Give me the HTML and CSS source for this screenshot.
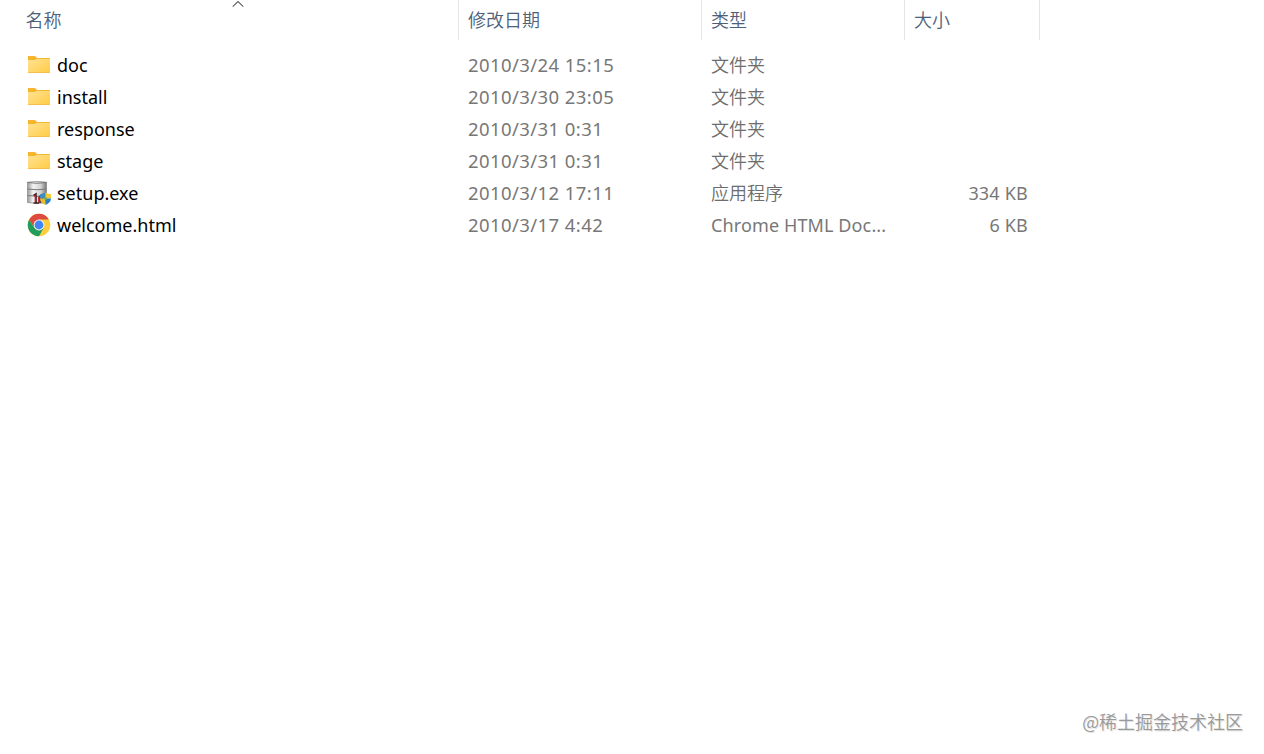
FILE: index.html
```html
<!DOCTYPE html>
<html lang="zh-CN">
<head>
    <meta charset="UTF-8">
    <meta name="viewport" content="width=device-width, initial-scale=1.0">
    <title>文件列表</title>
    <link rel="stylesheet" href="styles.css">
</head>
<body>
    <svg width="0" height="0" class="icon-defs">
        <defs>
            <linearGradient id="folderFront" x1="0" y1="0" x2="1" y2="1">
                <stop offset="0" stop-color="#FFE394"/>
                <stop offset="1" stop-color="#FFCB45"/>
            </linearGradient>
            <linearGradient id="metal" x1="0" y1="0" x2="1" y2="0">
                <stop offset="0" stop-color="#999"/>
                <stop offset="0.3" stop-color="#F4F4F4"/>
                <stop offset="0.7" stop-color="#D2D2D2"/>
                <stop offset="1" stop-color="#777"/>
            </linearGradient>
            <symbol id="folder" viewBox="0 0 24 24">
                <path d="M1 3.5Q1 3 1.5 3H8L10 5H22.5Q23 5 23 5.5V9H1Z" fill="#F5B52C"/>
                <path d="M1 7H8L9.5 6H23V20H1Z" fill="url(#folderFront)"/>
                <path d="M1 19.5H23" stroke="#F5C04A"/>
            </symbol>
        </defs>
    </svg>

    <div class="file-list">
        <!-- 表头 -->
        <div class="header">
            <div class="head-cell">名称
                <svg class="sort-arrow" width="12" height="8" viewBox="0 0 12 8"><path d="M0.7 6.7L6 1.6L11.3 6.7" fill="none" stroke="#606060" stroke-width="1.1"/></svg>
            </div>
            <div class="head-cell">修改日期</div>
            <div class="head-cell">类型</div>
            <div class="head-cell">大小</div>
        </div>

        <!-- 文件夹 -->
        <div class="row">
            <div class="name"><svg class="icon"><use href="#folder"/></svg><span>doc</span></div>
            <div class="cell date">2010/3/24 15:15</div>
            <div class="cell">文件夹</div>
            <div class="size"></div>
        </div>
        <div class="row">
            <div class="name"><svg class="icon"><use href="#folder"/></svg><span>install</span></div>
            <div class="cell date">2010/3/30 23:05</div>
            <div class="cell">文件夹</div>
            <div class="size"></div>
        </div>
        <div class="row">
            <div class="name"><svg class="icon"><use href="#folder"/></svg><span>response</span></div>
            <div class="cell date">2010/3/31 0:31</div>
            <div class="cell">文件夹</div>
            <div class="size"></div>
        </div>
        <div class="row">
            <div class="name"><svg class="icon"><use href="#folder"/></svg><span>stage</span></div>
            <div class="cell date">2010/3/31 0:31</div>
            <div class="cell">文件夹</div>
            <div class="size"></div>
        </div>

        <!-- 文件 -->
        <div class="row">
            <div class="name">
                <svg class="icon" viewBox="0 0 24 24">
                    <path d="M0.5 1.2Q10 -0.4 19.5 1.2V21.5Q10 23.5 0.5 21.5Z" fill="url(#metal)" stroke="#888" stroke-width="0.7"/>
                    <path d="M0.5 1.5Q10 3 19.5 1.5" fill="none" stroke="#777"/>
                    <path d="M0.5 8Q10 9.5 19.5 8M0.5 14.5Q10 16 19.5 14.5" fill="none" stroke="#777" stroke-width="1"/>
                    <path d="M6.5 14.5L9 13V21.5M6.5 22H12M13 22V16L15.5 14V22" fill="none" stroke="#3A2020" stroke-width="1.6"/>
                    <path d="M7 15L8.3 14.3V21.3M11.8 21.5V16L14 14.5V17.5H12V21.5" fill="none" stroke="#C01830" stroke-width="1.3"/>
                    <path d="M18.5 11.5Q15.5 13.3 13 13.3V17.5H18.5Z" fill="#3A8FC0"/>
                    <path d="M18.5 11.5Q21.5 13.3 24 13.3V17.5H18.5Z" fill="#F5CA32"/>
                    <path d="M13 17.5H18.5V24Q13.3 21.8 13 17.5Z" fill="#E9BE26"/>
                    <path d="M18.5 17.5H24Q23.7 21.8 18.5 24Z" fill="#2381CB"/>
                    <circle cx="18.5" cy="17.5" r="1.5" fill="#80A956"/>
                </svg>
                <span>setup.exe</span>
            </div>
            <div class="cell date">2010/3/12 17:11</div>
            <div class="cell">应用程序</div>
            <div class="size">334 KB</div>
        </div>
        <div class="row">
            <div class="name">
                <svg class="icon" viewBox="0 0 24 24">
                    <circle cx="12" cy="12" r="11.3" fill="#FFCD40"/>
                    <path d="M2.2 6.4A11.3 11.3 0 0 1 21.8 6.4H12L7.2 14.7Z" fill="#DD4B3E"/>
                    <path d="M2.2 6.4A11.3 11.3 0 0 0 12 23.3L16.8 14.7L12 17.5L7.2 14.7Z" fill="#219D5B"/>
                    <circle cx="12" cy="12" r="5.4" fill="#F1F1F1"/>
                    <circle cx="12" cy="12" r="4.4" fill="#4285F4"/>
                </svg>
                <span>welcome.html</span>
            </div>
            <div class="cell date">2010/3/17 4:42</div>
            <div class="cell doc-type">Chrome HTML Doc...</div>
            <div class="size">6 KB</div>
        </div>
    </div>

    <div class="watermark">@稀土掘金技术社区</div>
</body>
</html>
```
FILE: styles.css
```css
* {
    margin: 0;
    padding: 0;
    box-sizing: border-box;
}

body {
    display: flex;
    flex-direction: column;
    justify-content: space-between;
    height: 100vh;
    overflow: hidden;
    background: #fff;
    color: #6d6d6d;
    font-family: "Noto Sans", "Noto Sans CJK SC", sans-serif;
    font-size: 18px;
    line-height: 32px;
}

.icon-defs {
    position: absolute;
}

.file-list {
    width: 1040px;
}

.header,
.row {
    display: grid;
    grid-template-columns: 459px 243px 203px 135px;
}

.header {
    height: 40px;
    margin-bottom: 9px;
    color: #4c607a;
    font-family: "Noto Sans CJK SC", sans-serif;
    font-weight: 350;
    line-height: 38px;
}

.head-cell {
    position: relative;
    padding-left: 9px;
    border-right: 1px solid #e5e5e5;
}

.head-cell:first-child {
    padding-left: 25.5px;
}

.sort-arrow {
    position: absolute;
    top: 0;
    left: 232px;
}

.row {
    height: 32px;
}

.name {
    display: flex;
    align-items: center;
    padding-left: 27px;
    color: #000;
}

.icon {
    flex: none;
    width: 24px;
    height: 24px;
    margin-right: 6px;
}

.cell {
    padding-left: 9px;
    font-weight: 350;
    white-space: nowrap;
}

.date,
.doc-type,
.size {
    color: #777;
    font-weight: 400;
}

.date {
    font-size: 18.5px;
    letter-spacing: 0.42px;
}

.doc-type {
    letter-spacing: 0.12px;
}

.size {
    padding-right: 12px;
    letter-spacing: 0.2px;
    text-align: right;
}

.watermark {
    align-self: flex-end;
    margin: 0 21px 17px 0;
    color: #999;
    font-family: "Noto Sans CJK SC", sans-serif;
    font-weight: 350;
    text-shadow: 1px 1px 1px #ddd;
}
```
